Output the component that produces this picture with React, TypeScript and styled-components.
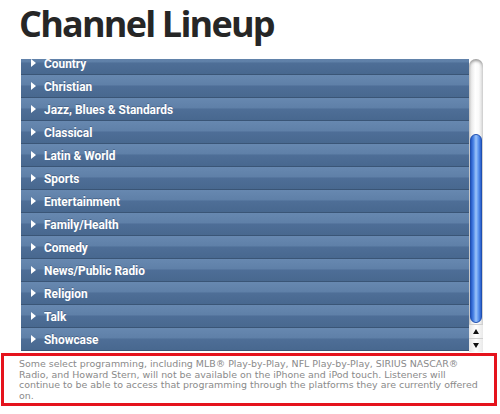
import React from "react";
import styled, { createGlobalStyle } from "styled-components";

const channels = [
  "Country",
  "Christian",
  "Jazz, Blues & Standards",
  "Classical",
  "Latin & World",
  "Sports",
  "Entertainment",
  "Family/Health",
  "Comedy",
  "News/Public Radio",
  "Religion",
  "Talk",
  "Showcase",
];

const GlobalStyle = createGlobalStyle`
  html, body {
    margin: 0;
    padding: 0;
    background: #fff;
  }
`;

const Page = styled.div`
  width: 500px;
  height: 414px;
  overflow: hidden;
`;

const Title = styled.h1`
  margin: 0;
  height: 59px;
  padding: 0 0 0 19px;
  box-sizing: border-box;
  font-family: "Open Sans", sans-serif;
  font-weight: 700;
  font-size: 36px;
  line-height: 48px;
  letter-spacing: -1.8px;
  color: #262626;
`;

const ListFrame = styled.div`
  display: flex;
  margin-left: 21px;
  width: 462px;
  height: 293px;
`;

const Viewport = styled.div`
  flex: 1;
  overflow: hidden;
`;

// list is scrolled a few pixels, so the first row is partly hidden
const List = styled.ul`
  list-style: none;
  margin: -7px 0 0;
  padding: 0;
`;

const Row = styled.li`
  display: flex;
  align-items: center;
  height: 22px;
  border-bottom: 1px solid #3a5576;
  background: linear-gradient(
    to bottom,
    #6788b0 0,
    #5f80a8 45%,
    #4e6e97 50%,
    #48688f 100%
  );
  color: #fff;
`;

const Arrow = styled.span`
  flex: none;
  width: 0;
  height: 0;
  margin: 0 8px 0 10px;
  border-top: 4px solid transparent;
  border-bottom: 4px solid transparent;
  border-left: 5px solid #fff;
`;

const Label = styled.span`
  display: inline-block;
  white-space: nowrap;
  font-family: Roboto, "Liberation Sans", sans-serif;
  font-weight: 700;
  font-size: 13.5px;
  transform: scaleX(0.88);
  transform-origin: left center;
  text-shadow: 0 -1px 0 rgba(40, 60, 90, 0.4);
`;

const Scrollbar = styled.div`
  width: 14px;
  display: flex;
  flex-direction: column;
  background: #fff;
`;

const Track = styled.div`
  flex: 1;
  display: flex;
  flex-direction: column;
  border-radius: 7px 7px 0 0;
  background: linear-gradient(to right, #c9c9c9 0, #ececec 20%, #fff 45%, #fafafa 70%, #d8d8d8 100%);
  box-shadow: inset 0 3px 3px -1px #9a9a9a;
`;

const Thumb = styled.div`
  margin: 75px 1px 1px;
  flex: 1;
  border-radius: 7px;
  border: 1px solid #1f4fb0;
  background: linear-gradient(
    to right,
    #2457c4 0,
    #4d86e6 25%,
    #9cc4fa 50%,
    #5c94ee 75%,
    #2a5fcc 100%
  );
`;

const StepButton = styled.div<{ $down?: boolean }>`
  height: 13px;
  display: flex;
  align-items: center;
  justify-content: center;
  background: linear-gradient(to right, #e6e6e6, #fff 50%, #e9e9e9);
  border-top: 1px solid #cfcfcf;
  &::after {
    content: "";
    width: 0;
    height: 0;
    border-left: 3px solid transparent;
    border-right: 3px solid transparent;
    ${({ $down }) =>
      $down ? "border-top: 5px solid #111;" : "border-bottom: 5px solid #111;"}
  }
`;

const Notice = styled.div`
  margin: 1px 0 0 1px;
  width: 496px;
  height: 53px;
  box-sizing: border-box;
  border: 3px solid #e5131d;
  padding: 3px 8px 0 15px;
  font-family: "DejaVu Sans", Verdana, sans-serif;
  font-size: 9.45px;
  line-height: 10.7px;
  color: #8a8a8a;
`;

export default function App() {
  return (
    <Page>
      <GlobalStyle />
      <Title>Channel Lineup</Title>
      <ListFrame>
        <Viewport>
          <List>
            {channels.map((name) => (
              <Row key={name}>
                <Arrow />
                <Label>{name}</Label>
              </Row>
            ))}
          </List>
        </Viewport>
        <Scrollbar>
          <Track>
            <Thumb />
          </Track>
          <StepButton />
          <StepButton $down />
        </Scrollbar>
      </ListFrame>
      <Notice>
        Some select programming, including MLB® Play-by-Play, NFL Play-by-Play,
        SIRIUS NASCAR® Radio, and Howard Stern, will not be available on the
        iPhone and iPod touch. Listeners will continue to be able to access that
        programming through the platforms they are currently offered on.
      </Notice>
    </Page>
  );
}
